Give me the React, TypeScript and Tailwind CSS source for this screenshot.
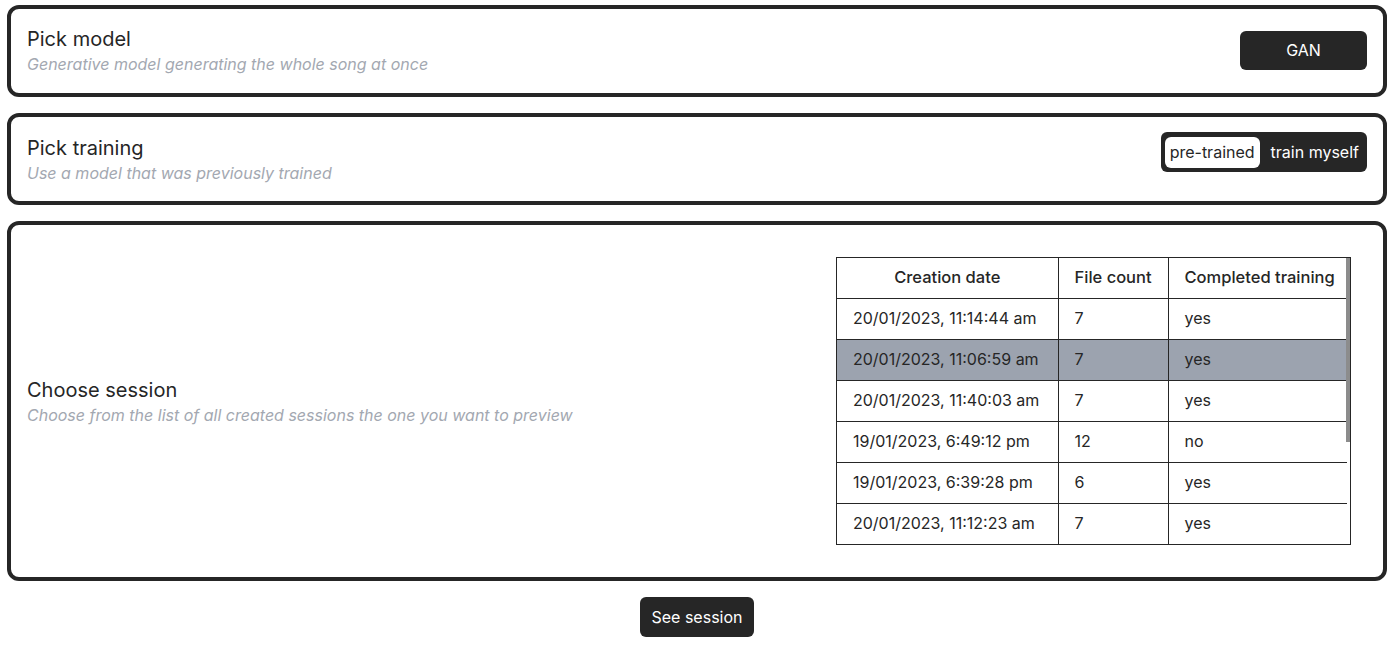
import React from "react";

const rows = [
  ["20/01/2023, 11:14:44 am", "7", "yes"],
  ["20/01/2023, 11:06:59 am", "7", "yes"],
  ["20/01/2023, 11:40:03 am", "7", "yes"],
  ["19/01/2023, 6:49:12 pm", "12", "no"],
  ["19/01/2023, 6:39:28 pm", "6", "yes"],
  ["20/01/2023, 11:12:23 am", "7", "yes"],
];

function Heading({ title, subtitle }: { title: string; subtitle: string }) {
  return (
    <div className="flex flex-col">
      <div className="text-[20px] leading-[28px] text-[#262626]">{title}</div>
      <div className="text-[16px] leading-[22px] italic text-[#a3a8b1]">{subtitle}</div>
    </div>
  );
}

export default function App() {
  return (
    <div
      className="w-[1395px] h-[648px] bg-white pl-[7px] pr-[8px] pt-[5px] flex flex-col gap-[16px]"
      style={{ fontFamily: "Inter, 'Noto Sans', sans-serif" }}
    >
      <div className="border-4 border-[#262626] rounded-xl px-[16px] pt-[16px] pb-[18px] flex items-center justify-between">
        <Heading title="Pick model" subtitle="Generative model generating the whole song at once" />
        <button className="w-[127px] h-[39px] rounded-md bg-[#262626] text-white text-[16px]">GAN</button>
      </div>

      <div className="border-4 border-[#262626] rounded-xl px-[16px] py-[17px] flex items-start justify-between">
        <Heading title="Pick training" subtitle="Use a model that was previously trained" />
        <div className="flex items-center bg-[#262626] rounded-md p-[4px] h-[40px] -mt-[2px]">
          <div className="h-[31px] px-[5px] flex items-center bg-white rounded-md text-[16px] text-[#262626]">pre-trained</div>
          <div className="h-[31px] pl-[11px] pr-[4px] flex items-center text-[16px] text-white">train myself</div>
        </div>
      </div>

      <div className="border-4 border-[#262626] rounded-xl pl-[16px] pr-[32px] py-[32px] flex items-center justify-between">
        <Heading title="Choose session" subtitle="Choose from the list of all created sessions the one you want to preview" />
        <div className="relative w-[515px] border border-[#262626] overflow-hidden">
          <table className="w-[510px] border-collapse text-[16px] text-[#262626]">
            <thead>
              <tr className="h-[40px]">
                <th className="w-[221px] pb-[1px] font-medium text-[16.5px] text-center border-r border-b border-[#262626]">Creation date</th>
                <th className="w-[110px] pb-[1px] font-medium text-[16.5px] text-left pl-[16px] border-r border-b border-[#262626]">File count</th>
                <th className="pb-[1px] font-medium text-[16.5px] text-left pl-[16px] border-b border-[#262626]">Completed training</th>
              </tr>
            </thead>
            <tbody>
              {rows.map((r, i) => {
                const last = i === rows.length - 1;
                const b = last ? "" : " border-b";
                return (
                  <tr key={i} className={i === 1 ? "h-[41px] bg-[#9ca3af]" : "h-[41px]"}>
                    <td className={"pl-[16px] pb-[1px] border-r border-[#262626]" + b}>{r[0]}</td>
                    <td className={"pl-[16px] pb-[1px] border-r border-[#262626]" + b}>{r[1]}</td>
                    <td className={"pl-[16px] pb-[1px] border-[#262626]" + b}>{r[2]}</td>
                  </tr>
                );
              })}
            </tbody>
          </table>
          <div className="absolute right-0 top-0 w-[4px] h-[184px] bg-[#8c8c8c]"></div>
        </div>
      </div>

      <div className="flex justify-center">
        <button className="w-[114px] h-[40px] rounded-md bg-[#262626] text-white text-[16px]">See session</button>
      </div>
    </div>
  );
}
